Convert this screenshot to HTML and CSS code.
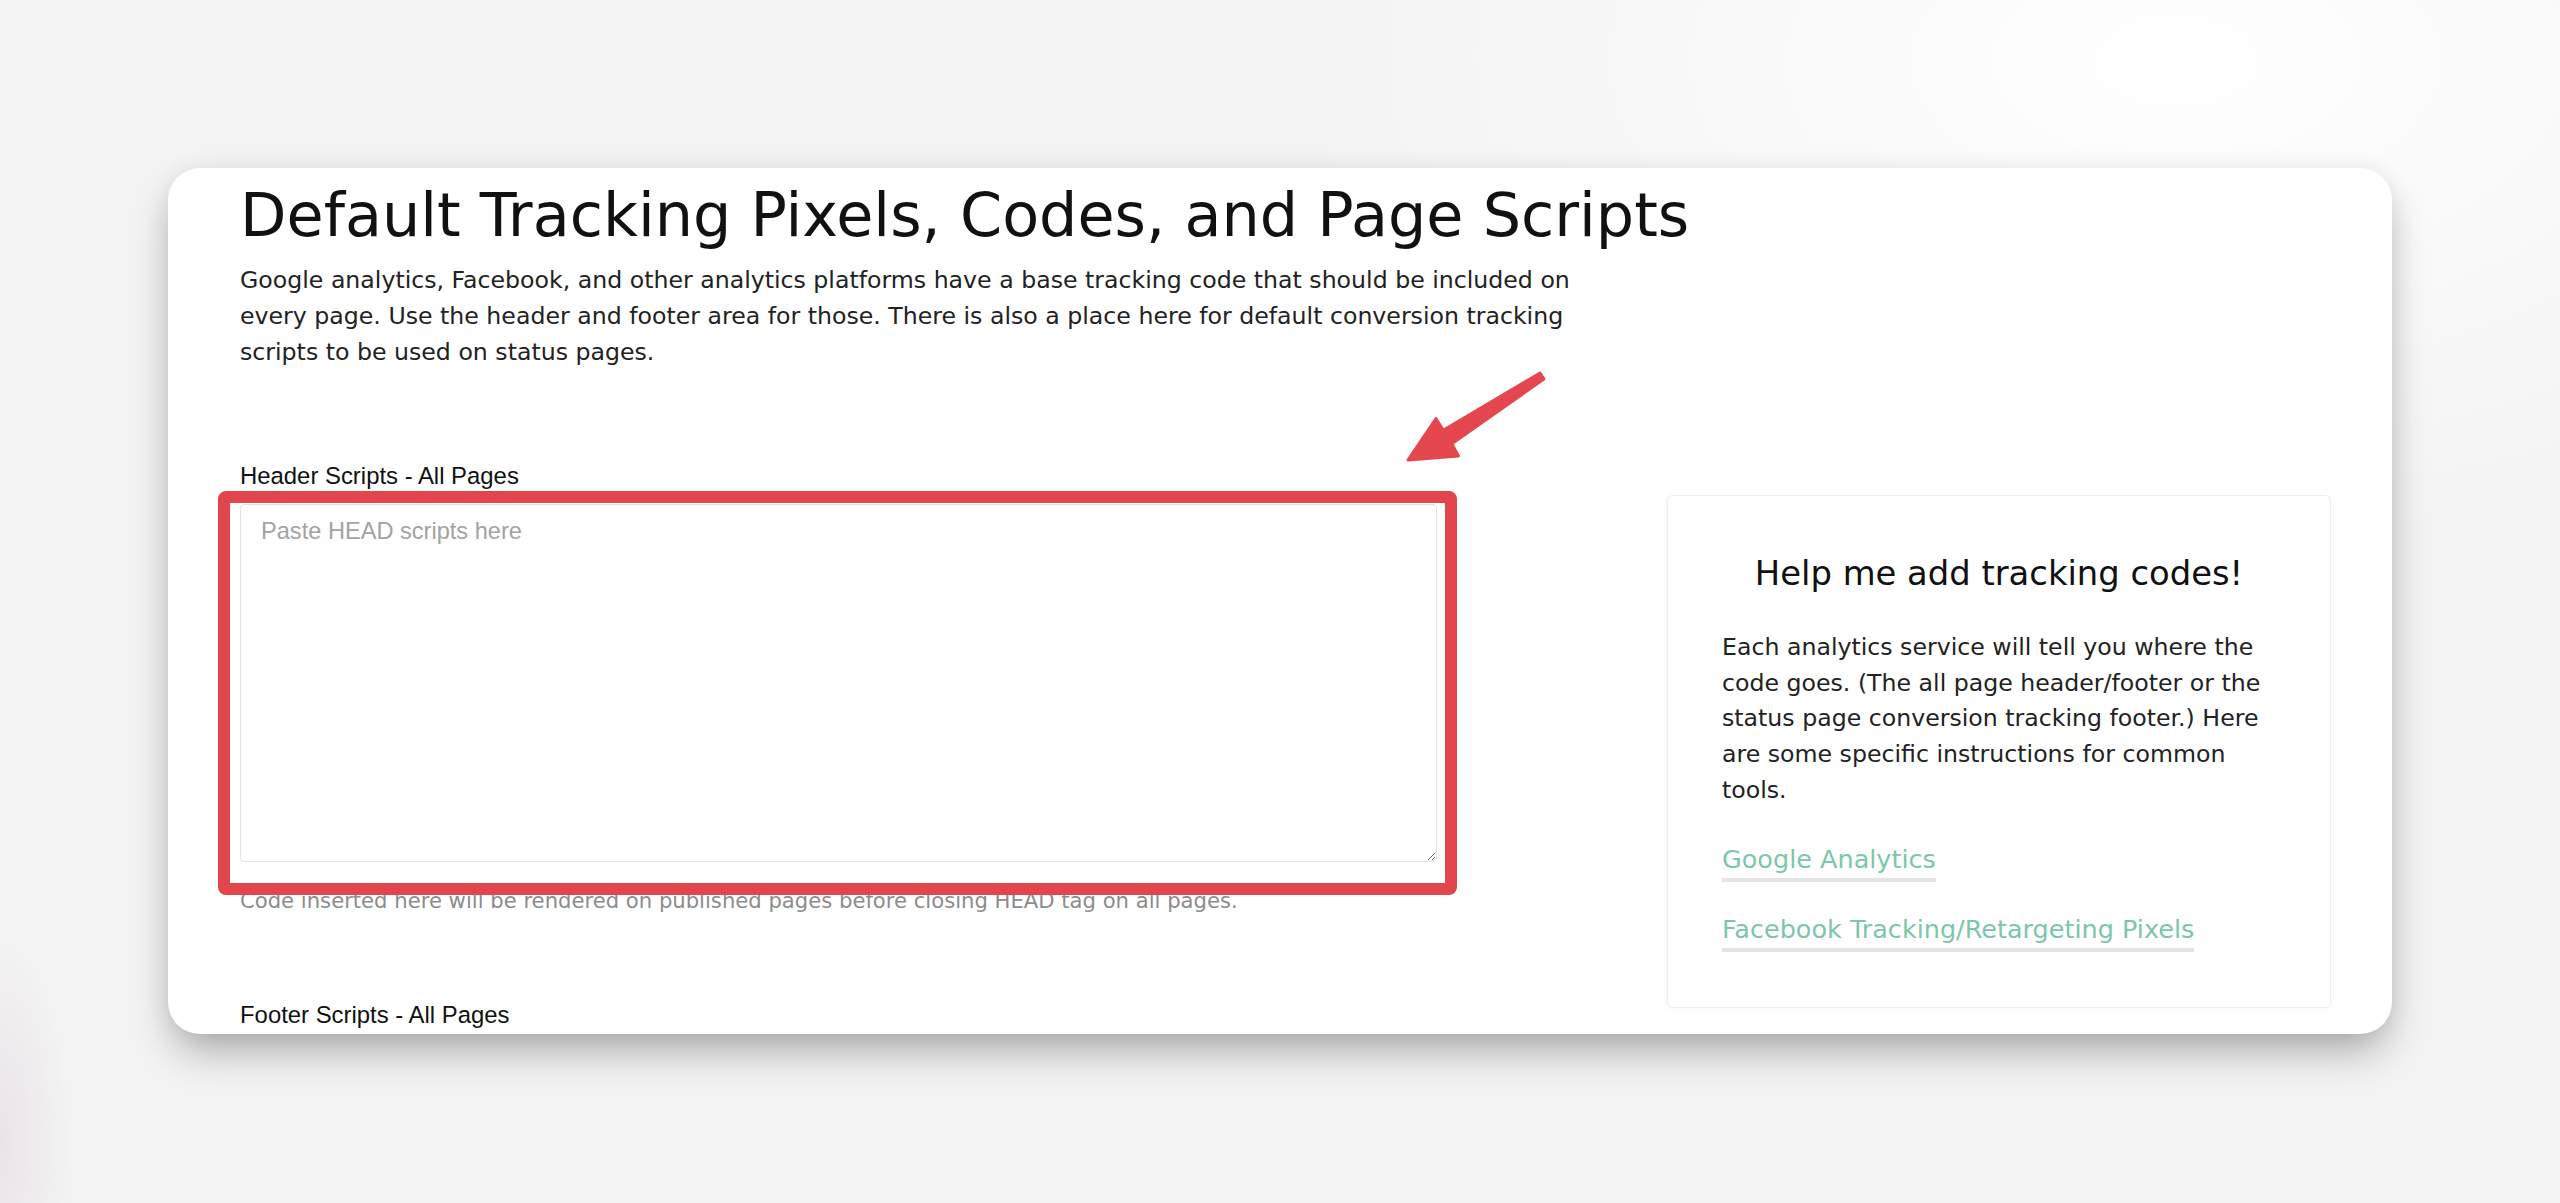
FILE: index.html
```html
<!DOCTYPE html>
<html lang="en">
<head>
  <meta charset="UTF-8">
  <title>Default Tracking Pixels, Codes, and Page Scripts</title>
  <link rel="stylesheet" href="styles.css">
</head>
<body>
  <div class="card">
    <h1>Default Tracking Pixels, Codes, and Page Scripts</h1>
    <p class="intro">Google analytics, Facebook, and other analytics platforms have a base tracking code that should be included on every page. Use the header and footer area for those. There is also a place here for default conversion tracking scripts to be used on status pages.</p>

    <div class="layout">
      <div class="form-col">
        <label for="head_scripts">Header Scripts - All Pages</label>
        <div class="field">
          <textarea id="head_scripts" placeholder="Paste HEAD scripts here"></textarea>
          <div class="highlight"></div>
        </div>
        <div class="field-help">Code inserted here will be rendered on published pages before closing HEAD tag on all pages.</div>

        <label class="footer-label" for="foot_scripts">Footer Scripts - All Pages</label>
      </div>

      <div class="help-box">
        <h3>Help me add tracking codes!</h3>
        <p>Each analytics service will tell you where the code goes. (The all page header/footer or the status page conversion tracking footer.) Here are some specific instructions for common tools.</p>
        <div class="help-links">
          <a href="#">Google Analytics</a>
          <a href="#">Facebook Tracking/Retargeting Pixels</a>
        </div>
      </div>
    </div>

    <!-- annotation arrow, drawn in page coordinates -->
    <svg class="arrow" width="152" height="102" viewBox="1398 366 152 102">
      <polygon points="1540.1,373 1443.2,430.2 1436,418.5 1408,460 1458.5,456 1451.8,443.8 1543.9,379"
               fill="#e4474d" stroke="#e4474d" stroke-width="3" stroke-linejoin="round"/>
    </svg>
  </div>
</body>
</html>
```

FILE: styles.css
```css
body {
  margin: 0;
  height: 1203px;
  overflow: hidden;
  font-family: 'DejaVu Sans', sans-serif;
  background:
    radial-gradient(ellipse 900px 500px at 85% 5%, #ffffff 0%, rgba(255,255,255,0) 100%),
    radial-gradient(ellipse 70px 200px at 0% 95%, #ebe2e8 0%, rgba(235,226,232,0) 100%),
    #f3f3f3;
}

.card {
  position: relative;
  box-sizing: border-box;
  width: 2224px;
  height: 866px;
  margin: 168px 0 0 168px;
  padding: 13px 61px 0 72px;
  background: #fff;
  border-radius: 32px;
  overflow: hidden;
  box-shadow: 0 22px 40px -6px rgba(0,0,0,0.3), 0 0 24px rgba(0,0,0,0.06);
}

h1 {
  margin: 0;
  font-size: 60.4px;
  line-height: 68.4px;
  font-weight: normal;
  color: #111;
}

.intro {
  margin: 13px 0 0;
  max-width: 1360px;
  font-size: 23.65px;
  line-height: 36px;
  color: #222;
}

.layout {
  display: flex;
  justify-content: space-between;
  align-items: flex-start;
  margin-top: 93px;
}

.form-col {
  width: 1200px;
}

label {
  display: block;
  font-family: 'Liberation Sans', Arial, sans-serif;
  font-size: 23.9px;
  line-height: 26px;
  color: #111;
  margin-bottom: 15px;
}

.field {
  position: relative;
}

textarea {
  display: block;
  box-sizing: border-box;
  width: 1197px;
  height: 358px;
  padding: 13px 20px;
  border: 1px solid #e1e1e1;
  border-radius: 4px;
  font-family: 'Liberation Sans', Arial, sans-serif;
  font-size: 23.6px;
  color: #333;
}

textarea::placeholder {
  color: #a3a3a3;
}

.highlight {
  position: absolute;
  left: -22px;
  top: -13px;
  width: 1239px;
  height: 404px;
  box-sizing: border-box;
  border: 12px solid #e2464c;
  border-radius: 8px;
}

.field-help {
  margin-top: 23px;
  font-size: 21.15px;
  line-height: 31.5px;
  color: #8c8c8c;
}

.footer-label {
  margin-top: 85px;
}

.help-box {
  box-sizing: border-box;
  width: 664px;
  margin-top: 32px;
  padding: 56px 54px 55px;
  border: 1px solid #efefef;
  border-radius: 6px;
  box-shadow: 0 1px 6px rgba(0,0,0,0.04);
}

.help-box h3 {
  margin: 0 0 34px;
  font-size: 33.8px;
  line-height: 43.3px;
  font-weight: normal;
  text-align: center;
  color: #111;
}

.help-box p {
  margin: 0;
  font-size: 23.65px;
  line-height: 35.8px;
  color: #222;
}

.help-links {
  display: flex;
  flex-direction: column;
  align-items: flex-start;
  gap: 32px;
  margin-top: 35px;
}

.help-links a {
  display: inline-block;
  font-size: 25.5px;
  line-height: 30px;
  padding-bottom: 4px;
  border-bottom: 4px solid #e4e4e4;
  color: #7dc6a9;
  text-decoration: none;
}

.arrow {
  position: absolute;
  left: 1230px;
  top: 198px;
}
```
